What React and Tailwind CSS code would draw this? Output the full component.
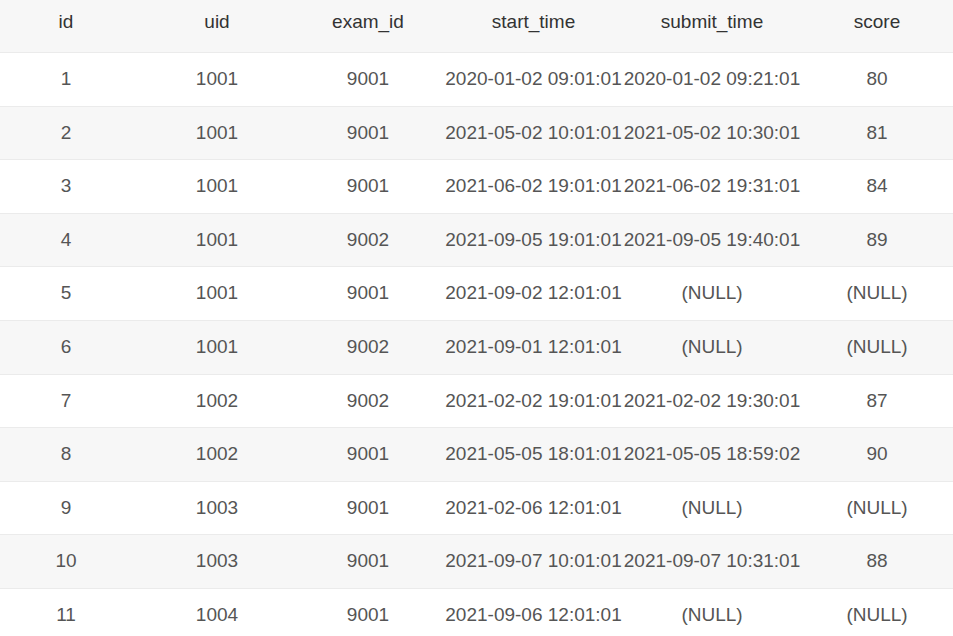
import React from "react";

const rows = [
  [1, 1001, 9001, "2020-01-02 09:01:01", "2020-01-02 09:21:01", "80"],
  [2, 1001, 9001, "2021-05-02 10:01:01", "2021-05-02 10:30:01", "81"],
  [3, 1001, 9001, "2021-06-02 19:01:01", "2021-06-02 19:31:01", "84"],
  [4, 1001, 9002, "2021-09-05 19:01:01", "2021-09-05 19:40:01", "89"],
  [5, 1001, 9001, "2021-09-02 12:01:01", "(NULL)", "(NULL)"],
  [6, 1001, 9002, "2021-09-01 12:01:01", "(NULL)", "(NULL)"],
  [7, 1002, 9002, "2021-02-02 19:01:01", "2021-02-02 19:30:01", "87"],
  [8, 1002, 9001, "2021-05-05 18:01:01", "2021-05-05 18:59:02", "90"],
  [9, 1003, 9001, "2021-02-06 12:01:01", "(NULL)", "(NULL)"],
  [10, 1003, 9001, "2021-09-07 10:01:01", "2021-09-07 10:31:01", "88"],
  [11, 1004, 9001, "2021-09-06 12:01:01", "(NULL)", "(NULL)"],
];

const headers = ["id", "uid", "exam_id", "start_time", "submit_time", "score"];

// column tracks: 132 / 170 / 132 / 189 (10px left pad) / 178 / 152
const grid = "grid grid-cols-[132px_170px_132px_189px_178px_152px] items-center";

function Cell({ children, idx }) {
  return (
    <div className={`whitespace-nowrap text-center ${idx === 3 ? "pl-[10px]" : ""}`}>
      {children}
    </div>
  );
}

export default function App() {
  return (
    <div
      className="w-[953px] h-[636px] overflow-hidden bg-white text-[19px]"
      style={{ fontFamily: '"Liberation Sans", Arial, sans-serif' }}
    >
      <div className={`${grid} h-[53px] pb-[7px] bg-[#f7f7f7] border-b border-[#ebebeb] text-[#333]`}>
        {headers.map((h, i) => (
          <Cell key={h} idx={i}>{h}</Cell>
        ))}
      </div>
      {rows.map((r, ri) => (
        <div
          key={r[0]}
          className={`${grid} h-[53.6px] border-b border-[#ebebeb] text-[#555] ${
            ri % 2 === 1 ? "bg-[#f7f7f7]" : "bg-white"
          }`}
        >
          {r.map((v, i) => (
            <Cell key={i} idx={i}>{v}</Cell>
          ))}
        </div>
      ))}
    </div>
  );
}
